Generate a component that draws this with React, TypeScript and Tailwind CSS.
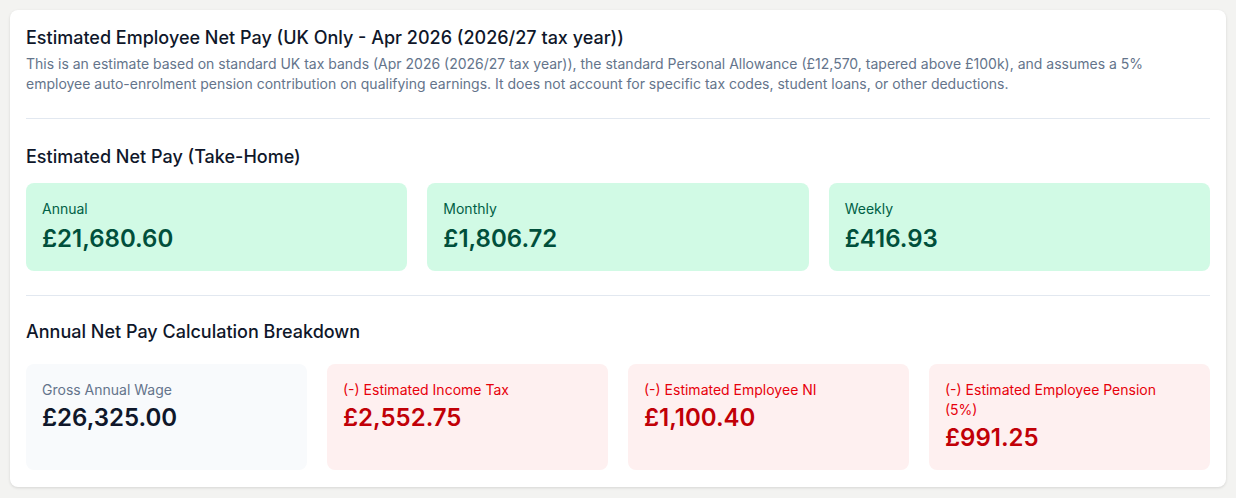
type Stat = {
  label: string;
  value: string;
  tone: 'green' | 'neutral' | 'red';
};

const netPay: Stat[] = [
  { label: 'Annual', value: '£21,680.60', tone: 'green' },
  { label: 'Monthly', value: '£1,806.72', tone: 'green' },
  { label: 'Weekly', value: '£416.93', tone: 'green' },
];

const breakdown: Stat[] = [
  { label: 'Gross Annual Wage', value: '£26,325.00', tone: 'neutral' },
  { label: '(-) Estimated Income Tax', value: '£2,552.75', tone: 'red' },
  { label: '(-) Estimated Employee NI', value: '£1,100.40', tone: 'red' },
  { label: '(-) Estimated Employee Pension (5%)', value: '£991.25', tone: 'red' },
];

const toneStyles = {
  green: { box: 'bg-[#d1fae5]', label: 'text-[#006045]', value: 'text-[#004f3b]' },
  neutral: { box: 'bg-[#f8fafc]', label: 'text-[#64748b]', value: 'text-[#0f172a]' },
  red: { box: 'bg-[#fef0f0]', label: 'text-[#e7000b]', value: 'text-[#c10007]' },
};

const StatCard = ({ stat, gap }: { stat: Stat; gap: string }) => {
  const s = toneStyles[stat.tone];
  return (
    <div className={`rounded-lg p-4 ${s.box}`}>
      <div className={`pr-5 text-sm leading-5 ${s.label}`}>{stat.label}</div>
      <div className={`${gap} text-2xl leading-8 font-semibold ${s.value}`}>{stat.value}</div>
    </div>
  );
};

export default function App() {
  return (
    <div className="min-h-screen bg-[#f3f3f1] p-2.5 font-['Inter',sans-serif]">
      <div className="rounded-lg bg-white px-4 pt-4 pb-[17px] shadow-[0_1px_3px_rgba(0,0,0,0.12)]">
        <h2 className="text-lg leading-6 font-medium text-[#0f172a]">
          Estimated Employee Net Pay (UK Only - Apr 2026 (2026/27 tax year))
        </h2>
        <p className="mt-1 text-sm leading-5 text-[#64748b]">
          This is an estimate based on standard UK tax bands (Apr 2026 (2026/27 tax year)), the standard
          Personal Allowance (£12,570, tapered above £100k), and assumes a 5% employee auto-enrolment
          pension contribution on qualifying earnings. It does not account for specific tax codes, student
          loans, or other deductions.
        </p>

        <div className="mt-6 border-t border-[#e2e8f0] pt-6">
          <h3 className="mb-3 text-lg leading-7 font-medium text-[#0f172a]">Estimated Net Pay (Take-Home)</h3>
          <div className="grid grid-cols-3 gap-5">
            {netPay.map((s) => (
              <StatCard key={s.label} stat={s} gap="mt-1" />
            ))}
          </div>
        </div>

        <div className="mt-6 border-t border-[#e2e8f0] pt-6">
          <h3 className="mb-5 text-lg leading-6 font-medium text-[#0f172a]">Annual Net Pay Calculation Breakdown</h3>
          <div className="grid grid-cols-4 gap-5">
            {breakdown.map((s) => (
              <StatCard key={s.label} stat={s} gap="mt-0.5" />
            ))}
          </div>
        </div>
      </div>
    </div>
  );
}
